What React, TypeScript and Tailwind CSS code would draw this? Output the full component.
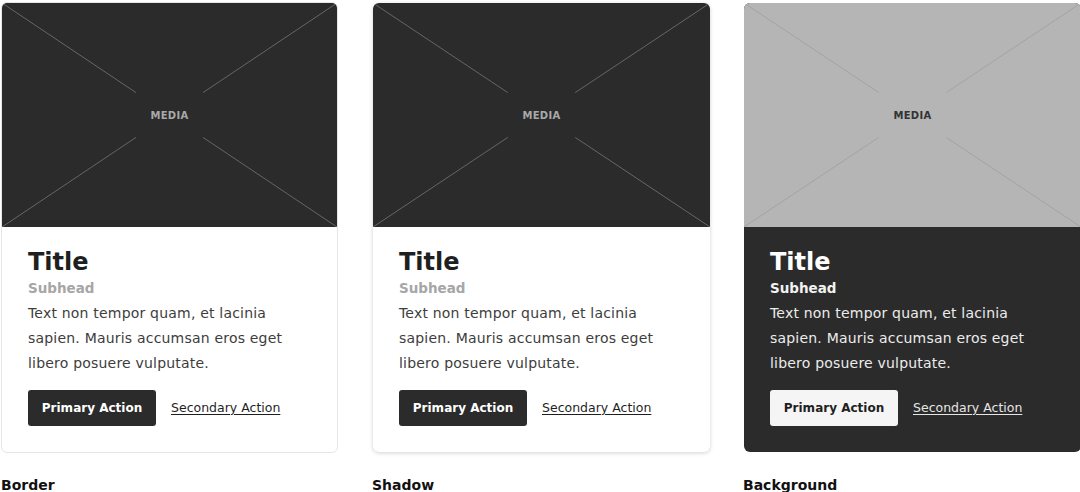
import React from 'react';

type Variant = 'border' | 'shadow' | 'background';

const MediaPlaceholder: React.FC<{ light?: boolean }> = ({ light }) => (
  <div className={`relative h-[224px] flex items-center justify-center ${light ? 'bg-[#b5b5b5]' : 'bg-[#2b2b2b]'}`}>
    <svg className="absolute inset-0 w-full h-full" viewBox="0 0 100 100" preserveAspectRatio="none">
      <g stroke={light ? '#a3a3a3' : '#666666'} strokeWidth="1">
        <line x1="0" y1="0" x2="40" y2="40" vectorEffect="non-scaling-stroke" />
        <line x1="60" y1="60" x2="100" y2="100" vectorEffect="non-scaling-stroke" />
        <line x1="100" y1="0" x2="60" y2="40" vectorEffect="non-scaling-stroke" />
        <line x1="40" y1="60" x2="0" y2="100" vectorEffect="non-scaling-stroke" />
      </g>
    </svg>
    <span className={`relative text-[10px] font-bold tracking-[0.3px] ${light ? 'text-[#333]' : 'text-[#a9a9a9]'}`}>MEDIA</span>
  </div>
);

const Card: React.FC<{ variant: Variant }> = ({ variant }) => {
  const dark = variant === 'background';
  // border card gets a 1px border; the others get 1px margin so all cards line up
  const frame =
    variant === 'border'
      ? 'border border-[#e6e6e6] bg-white'
      : variant === 'shadow'
        ? 'my-px w-[335px] mx-px bg-white shadow-[0_1px_4px_rgba(0,0,0,0.18)]'
        : 'my-px w-[335px] mx-px bg-[#2b2b2b]';

  return (
    <div className={`w-[337px] rounded-md overflow-hidden ${frame}`}>
      <MediaPlaceholder light={dark} />
      <div className="px-[26px] pt-[20px] pb-[26px]">
        <h3 className={`text-[24px] leading-[30px] font-bold ${dark ? 'text-white' : 'text-[#1f1f1f]'}`}>Title</h3>
        <p className={`mt-[1px] text-[13.5px] leading-[20px] font-bold ${dark ? 'text-[#f2f2f2]' : 'text-[#a6a6a6]'}`}>
          Subhead
        </p>
        <p className={`mt-[3px] text-[14px] tracking-[0.2px] leading-[25px] ${dark ? 'text-[#ececec]' : 'text-[#3d3d3d]'}`}>
          Text non tempor quam, et lacinia sapien. Mauris accumsan eros eget libero posuere vulputate.
        </p>
        <div className="mt-[14px] flex items-center gap-[15px]">
          <button
            className={`h-[36px] w-[128px] rounded-[3px] text-[12px] font-bold ${
              dark ? 'bg-[#f5f5f5] text-[#1f1f1f]' : 'bg-[#2b2b2b] text-white'
            }`}
          >
            Primary Action
          </button>
          <a className={`text-[12.5px] underline underline-offset-2 ${dark ? 'text-[#e6e6e6]' : 'text-[#1f1f1f]'}`}>
            Secondary Action
          </a>
        </div>
      </div>
    </div>
  );
};

export default function App() {
  const items: { variant: Variant; label: string }[] = [
    { variant: 'border', label: 'Border' },
    { variant: 'shadow', label: 'Shadow' },
    { variant: 'background', label: 'Background' },
  ];

  return (
    <div className="w-[1080px] h-[492px] overflow-hidden bg-white font-['DejaVu_Sans',sans-serif]">
      <div className="flex gap-[34px] pl-[1px] pt-[2px]">
        {items.map((it) => (
          <div key={it.variant} className="flex flex-col w-[337px]">
            <Card variant={it.variant} />
            <p className="mt-[22px] text-[14px] leading-[20px] font-bold text-[#111]">{it.label}</p>
          </div>
        ))}
      </div>
    </div>
  );
}
